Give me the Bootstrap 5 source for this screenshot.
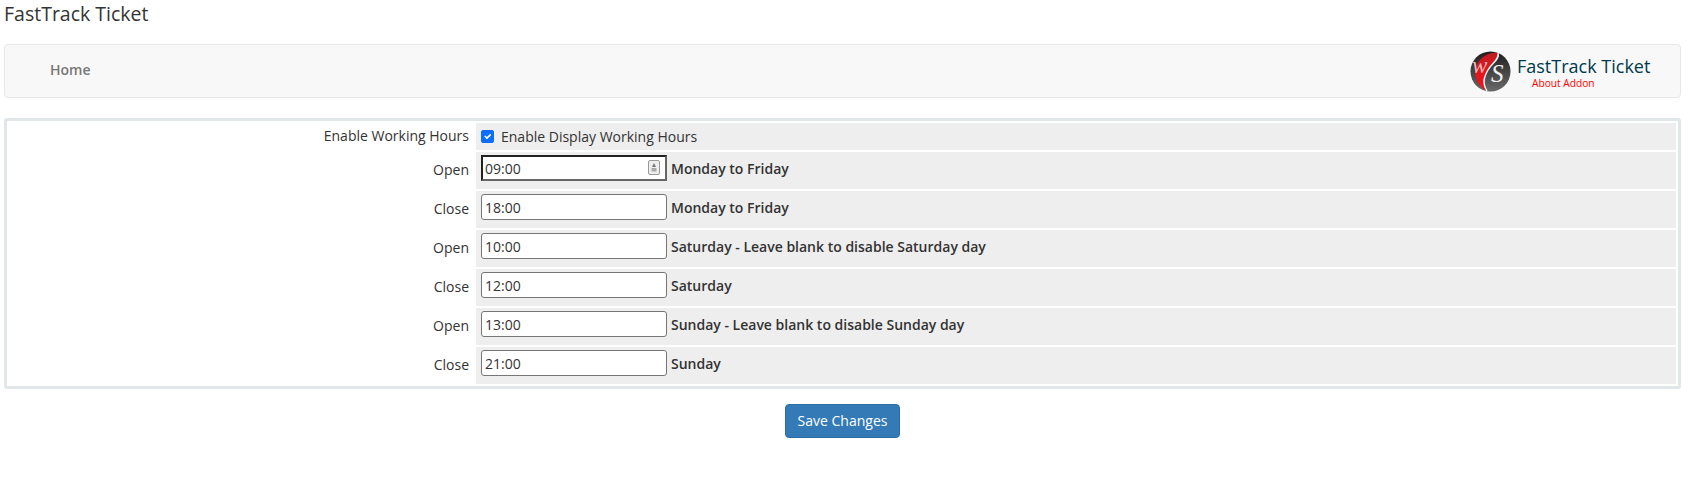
<!DOCTYPE html>
<html lang="en">

<head>
    <meta charset="UTF-8">
    <title>FastTrack Ticket</title>
    <link href="https://cdn.jsdelivr.net/npm/bootstrap@5.3.0/dist/css/bootstrap.min.css" rel="stylesheet">
    <style>
        body {
            font-family: "Open Sans", sans-serif;
            font-size: 14px;
            color: #333;
            background: #fff;
            padding: 0 8px 0 4px;
        }

        .page-title {
            font-size: 19.5px;
            font-weight: 400;
            line-height: 27px;
            color: #333;
            margin: 0 0 17px;
        }

        .top-bar {
            height: 54px;
            padding: 0 0 0 45px;
            background: #f8f8f8;
            border: 1px solid #e7e7e7;
            border-radius: 4px;
            margin-bottom: 20px;
        }

        .top-bar .nav-link {
            padding: 0;
            font-size: 14px;
            font-weight: 600;
            color: #777;
        }

        .brand-box {
            width: 210px;
            height: 40px;
        }

        .brand-logo {
            margin-right: 6px;
        }

        .brand-name {
            font-size: 18px;
            line-height: 24px;
            color: #00394d;
        }

        .brand-sub {
            font-size: 10.2px;
            line-height: 10px;
            color: #f00;
            padding-left: 15px;
        }

        .hours-panel {
            border: 3px solid #e1e6e8;
            border-radius: 3px;
        }

        .hours-table {
            width: 100%;
            border-collapse: separate;
            border-spacing: 2px;
        }

        .label-cell {
            width: 465px;
            padding: 0 5px 2px 0;
            text-align: right;
            vertical-align: middle;
        }

        .field-cell {
            background: #eee;
            padding: 3px 5px 8px;
            font-weight: 600;
            vertical-align: top;
        }

        .check-row .field-cell {
            padding: 3px 5px;
            font-weight: 400;
        }

        .check-row .form-check-input {
            width: 13px;
            height: 13px;
            margin: 0 7px 0 0;
            border-radius: 2px;
        }

        .time-box {
            width: 186px;
            margin-right: 4px;
        }

        .time-input {
            display: block;
            width: 100%;
            height: 26px;
            padding: 0 3px;
            font-size: 14px;
            color: #333;
            border: 1px solid #767676;
            border-radius: 3px;
            outline: 0;
        }

        .time-input.is-focus {
            border: 2px solid #222;
            border-right-color: #666;
            border-bottom-color: #666;
            border-radius: 0;
            padding: 0 2px;
        }

        .spin-icon {
            position: absolute;
            right: 7px;
            top: 5px;
        }

        .save-btn {
            font-size: 14px;
            line-height: 20px;
            padding: 6px 12px;
            background: #337ab7;
            border: 1px solid #2e6da4;
            border-radius: 4px;
        }

        .save-row {
            margin-top: 15px;
        }
    </style>
</head>

<body>
    <h1 class="page-title">FastTrack Ticket</h1>

    <nav class="top-bar d-flex align-items-center justify-content-between">
        <a class="nav-link mb-1" href="#">Home</a>
        <div class="brand-box d-flex align-items-center">
            <svg width="41" height="41" viewBox="0 0 41 41" class="brand-logo flex-shrink-0">
                <defs>
                    <linearGradient id="redSide" x1="0" y1="0" x2="0" y2="1">
                        <stop offset="0" stop-color="#c01c22" />
                        <stop offset="0.55" stop-color="#e8131c" />
                        <stop offset="1" stop-color="#e01a22" />
                    </linearGradient>
                    <linearGradient id="darkSide" x1="0" y1="0" x2="0" y2="1">
                        <stop offset="0" stop-color="#1e1e1e" />
                        <stop offset="1" stop-color="#6a6a6a" />
                    </linearGradient>
                </defs>
                <circle cx="20.5" cy="20.5" r="20" fill="url(#darkSide)" />
                <path d="M28 2A20 20 0 0 0 17 40C12 32 14 26 18 19C22 12 30 8 28 2Z" fill="url(#redSide)" />
                <path d="M28 2C30 8 22 12 18 19C14 26 12 32 17 40" fill="none" stroke="#f2f2f2" stroke-width="1.5" />
                <text x="2" y="22" font-family="Liberation Serif" font-style="italic" font-size="23" fill="#f0b5b5">w</text>
                <text x="21" y="31" font-family="Liberation Serif" font-style="italic" font-size="25" fill="#f2f2f2">S</text>
            </svg>
            <div>
                <div class="brand-name">FastTrack Ticket</div>
                <div class="brand-sub">About Addon</div>
            </div>
        </div>
    </nav>

    <form id="hoursForm">
        <div class="hours-panel">
            <table class="hours-table">
                <tbody>
                    <tr class="check-row">
                        <td class="label-cell">Enable Working Hours</td>
                        <td class="field-cell">
                            <div class="d-flex align-items-center">
                                <input class="form-check-input" type="checkbox" id="enableHours" checked>
                                <label for="enableHours">Enable Display Working Hours</label>
                            </div>
                        </td>
                    </tr>
                    <tr>
                        <td class="label-cell">Open</td>
                        <td class="field-cell">
                            <div class="d-flex align-items-center">
                                <div class="time-box position-relative">
                                    <input class="time-input is-focus" type="text" value="09:00">
                                    <svg class="spin-icon" width="12" height="15" viewBox="0 0 12 15">
                                        <rect x="0.5" y="0.5" width="11" height="14" rx="1.5" fill="#eee" stroke="#999" />
                                        <path d="M6 3L8 7H4Z" fill="#777" />
                                        <rect x="3.5" y="8" width="5" height="3.5" fill="#aaa" />
                                    </svg>
                                </div>
                                <span>Monday to Friday</span>
                            </div>
                        </td>
                    </tr>
                    <tr>
                        <td class="label-cell">Close</td>
                        <td class="field-cell">
                            <div class="d-flex align-items-center">
                                <div class="time-box"><input class="time-input" type="text" value="18:00"></div>
                                <span>Monday to Friday</span>
                            </div>
                        </td>
                    </tr>
                    <tr>
                        <td class="label-cell">Open</td>
                        <td class="field-cell">
                            <div class="d-flex align-items-center">
                                <div class="time-box"><input class="time-input" type="text" value="10:00"></div>
                                <span>Saturday - Leave blank to disable Saturday day</span>
                            </div>
                        </td>
                    </tr>
                    <tr>
                        <td class="label-cell">Close</td>
                        <td class="field-cell">
                            <div class="d-flex align-items-center">
                                <div class="time-box"><input class="time-input" type="text" value="12:00"></div>
                                <span>Saturday</span>
                            </div>
                        </td>
                    </tr>
                    <tr>
                        <td class="label-cell">Open</td>
                        <td class="field-cell">
                            <div class="d-flex align-items-center">
                                <div class="time-box"><input class="time-input" type="text" value="13:00"></div>
                                <span>Sunday - Leave blank to disable Sunday day</span>
                            </div>
                        </td>
                    </tr>
                    <tr>
                        <td class="label-cell">Close</td>
                        <td class="field-cell">
                            <div class="d-flex align-items-center">
                                <div class="time-box"><input class="time-input" type="text" value="21:00"></div>
                                <span>Sunday</span>
                            </div>
                        </td>
                    </tr>
                </tbody>
            </table>
        </div>
        <div class="save-row text-center">
            <button type="submit" class="btn btn-primary save-btn">Save Changes</button>
        </div>
    </form>
</body>

</html>
